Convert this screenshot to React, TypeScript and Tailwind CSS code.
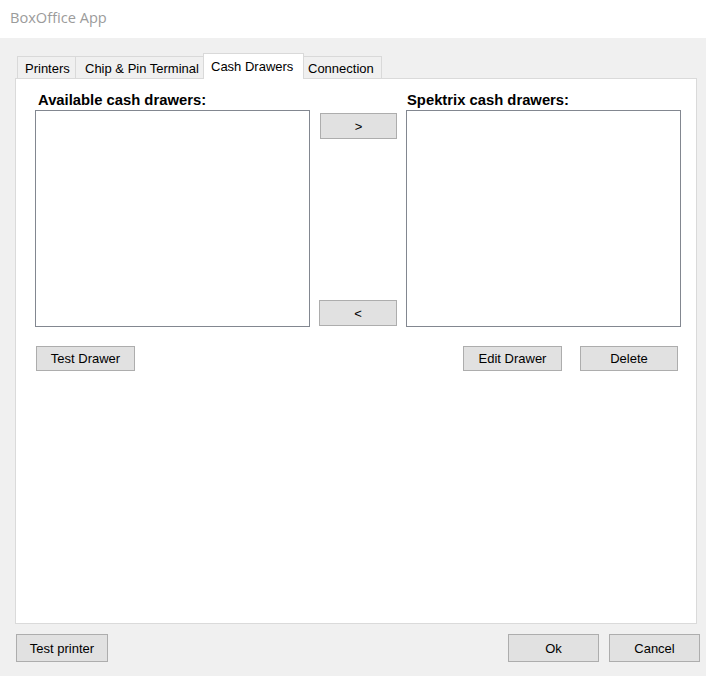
import React from "react";

function Btn({ label, className }: { label: string; className: string }) {
  return (
    <div
      className={
        "flex items-center justify-center bg-[#e1e1e1] border border-[#adadad] text-[13px] text-black leading-none " +
        className
      }
    >
      {label}
    </div>
  );
}

export default function App() {
  return (
    <div className="w-[706px] h-[676px] bg-[#f0f0f0] flex flex-col font-['Liberation_Sans',Arial,sans-serif] text-[13px] text-black overflow-hidden">
      <div className="h-[38px] shrink-0 bg-white pl-[10px] pt-[7px] text-[#9b9b9b] font-['Open_Sans',sans-serif] text-[14.6px] leading-[20px]">
        BoxOffice App
      </div>
      <div className="pl-[15px] pt-[15px] flex flex-col">
        {/* tabs */}
        <div className="flex items-end h-[25px] pl-[2px]">
          <div className="w-[58px] h-[22px] border-t border-l border-[#d9d9d9] bg-[#f0f0f0] flex items-center pl-[7px] pt-[1px] leading-none">
            Printers
          </div>
          <div className="w-[128px] h-[22px] border-t border-l border-[#d9d9d9] bg-[#f0f0f0] flex items-center pl-[9px] pt-[1px] leading-none">
            Chip &amp; Pin Terminal
          </div>
          <div className="relative z-10 w-[101px] h-[26px] -mb-px border-t border-l border-r border-[#d9d9d9] bg-white flex items-start pt-[6px] pl-[7px] leading-none">
            Cash Drawers
          </div>
          <div className="w-[78px] h-[22px] border-t border-r border-[#d9d9d9] bg-[#f0f0f0] flex items-center pl-[4px] pt-[1px] leading-none">
            Connection
          </div>
        </div>
        {/* panel */}
        <div className="w-[682px] h-[546px] bg-white border border-[#dadada] flex pl-[19px]">
          {/* left column */}
          <div className="w-[275px] flex flex-col pt-[12px]">
            <div className="h-[19px] pl-[3px] font-bold text-[14.8px] leading-[19px]">
              Available cash drawers:
            </div>
            <div className="h-[217px] bg-white border border-[#828790]" />
            <Btn label="Test Drawer" className="mt-[19px] ml-[1px] w-[99px] h-[25px]" />
          </div>
          {/* middle column */}
          <div className="ml-[9px] w-[78px] flex flex-col pt-[31px]">
            <Btn label=">" className="mt-[3px] ml-[1px] w-[77px] h-[26px] text-[#333]" />
            <Btn label="<" className="mt-[161px] w-[78px] h-[26px] text-[#333]" />
          </div>
          {/* right column */}
          <div className="ml-[9px] w-[275px] flex flex-col pt-[12px]">
            <div className="h-[19px] pl-[1px] font-bold text-[14.8px] leading-[19px]">
              Spektrix cash drawers:
            </div>
            <div className="h-[217px] bg-white border border-[#828790]" />
            <div className="mt-[19px] flex justify-end pr-[3px] gap-[18px]">
              <Btn label="Edit Drawer" className="w-[99px] h-[25px]" />
              <Btn label="Delete" className="w-[98px] h-[25px]" />
            </div>
          </div>
        </div>
        {/* bottom buttons */}
        <div className="mt-[10px] w-[685px] flex items-center">
          <Btn label="Test printer" className="ml-[1px] w-[92px] h-[28px]" />
          <div className="flex-1" />
          <Btn label="Ok" className="w-[91px] h-[28px]" />
          <Btn label="Cancel" className="ml-[10px] w-[91px] h-[28px]" />
        </div>
      </div>
    </div>
  );
}
